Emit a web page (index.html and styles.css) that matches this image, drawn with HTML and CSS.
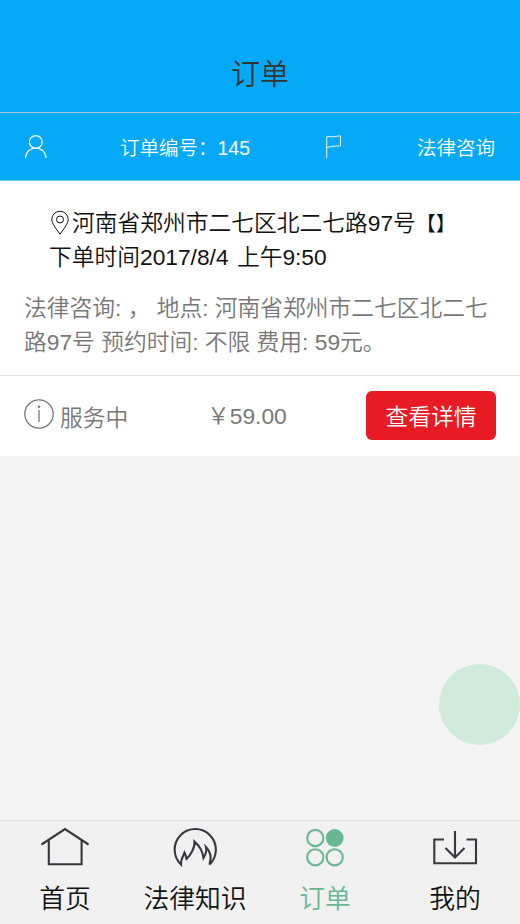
FILE: index.html
```
<!DOCTYPE html>
<html lang="zh-CN">
<head>
<meta charset="utf-8">
<title>订单</title>
<link rel="stylesheet" href="styles.css">
</head>
<body>
<div class="app">
  <header class="header"><h1>订单</h1></header>
  <main class="content">
    <section class="order">
      <div class="order-head">
        <svg class="user" width="24" height="26" viewBox="0 0 24 26"><circle cx="11.8" cy="8" r="6.4"/><path d="M1.5 24C2 10.8 21.500 10.800 22 24"/></svg>
        <span class="number">订单编号：145</span>
        <svg class="flag" width="20" height="26" viewBox="0 0 20 26"><path d="M3.700 24.500V2.700Q10 3.200 17.500 1.800V11.800Q10 12 3.700 13.500"/></svg>
        <span class="type">法律咨询</span>
      </div>
      <div class="order-body">
        <div class="address">
          <p><svg class="pin" width="23" height="26" viewBox="0 0 23 26"><path d="M11 24.200C7 18.500 2.800 13.500 2.800 9.500A8.200 8.200 0 0 1 19.200 9.500C19.200 13.500 15 18.500 11 24.200Z"/><circle cx="11" cy="9.500" r="3.500"/></svg><span>河南省郑州市二七区北二七路97号<span class="brackets">【】</span></span></p>
          <p class="time">下单时间2017/8/4 上午9:50</p>
        </div>
        <div class="details">
          <p>法律咨询: ， 地点: 河南省郑州市二七区北二七</p>
          <p>路97号 预约时间: 不限 费用: 59元。</p>
        </div>
      </div>
      <div class="order-foot">
        <svg class="info" width="32" height="32" viewBox="0 0 32 32"><circle cx="16" cy="16" r="14.200"/><path d="M16 12V24"/><circle class="dot" cx="16" cy="8.700" r="1.200"/></svg>
        <span class="status">服务中</span>
        <span class="price">￥59.00</span>
        <button type="button">查看详情</button>
      </div>
    </section>
  </main>
  <nav class="tabs">
    <a class="tab">
      <svg width="50" height="42" viewBox="0 0 50 42"><path d="M1.500 17.500L25 2L48.500 17.500M8.800 13V37.300H41.600V13"/></svg>
      <span>首页</span>
    </a>
    <a class="tab">
      <svg width="50" height="42" viewBox="0 0 50 42"><path d="M11 37.500A20.600 20.600 0 1 1 39.500 37.500C42 30 41 25 36 20C37 24 36 27 33.500 31C32.500 23 29 18.500 24.500 14.500C25 21 20 29 16.500 32C15.500 29 16 28 14.500 25.500C13.500 29 10.500 32 11 37.500Z"/></svg>
      <span>法律知识</span>
    </a>
    <a class="tab active">
      <svg width="50" height="42" viewBox="0 0 50 42"><circle cx="15.300" cy="11" r="8.100"/><circle class="dot" cx="34.700" cy="11" r="8.900"/><circle cx="15.300" cy="30.300" r="8.100"/><circle cx="34.700" cy="30.300" r="8.100"/></svg>
      <span>订单</span>
    </a>
    <a class="tab">
      <svg width="50" height="42" viewBox="0 0 50 42"><path d="M14 12.500H4.300V36.300H46V12.500H36.500M25 4V30.500M15.500 21L25 30.500L34.500 21"/></svg>
      <span>我的</span>
    </a>
  </nav>
  <div class="float-button"></div>
</div>
</body>
</html>
```
FILE: styles.css
```
* { box-sizing: border-box; }
body {
  margin: 0;
  font-family: "Liberation Sans", "Noto Sans CJK SC", sans-serif;
  font-weight: 350;
  background: #f4f4f4;
}
.app { display: flex; flex-direction: column; height: 924px; position: relative; overflow: hidden; }
h1, p { margin: 0; font-weight: inherit; }
svg { display: block; flex: none; fill: none; stroke: currentColor; }
.dot { fill: currentColor; stroke: none; }

.header {
  height: 113px;
  padding-top: 37px;
  background: #05a9f7;
  border-bottom: 1px solid #a9c8d9;
  color: #333;
  text-align: center;
}
h1 { font-size: 29px; line-height: 76px; }
.content { flex: 1; }
.order { background: #fff; white-space: nowrap; }
.order-head {
  display: grid;
  grid-template-columns: 96px 203px 60px 1fr;
  align-items: center;
  height: 68px;
  padding: 0 25px 1px 24px;
  background: #05a9f7;
  border-bottom: 1px solid #69c9f8;
  color: #fff;
  font-size: 19.500px;
}
.type { text-align: right; }
.user { margin-top: 2px; stroke-width: 1.200; }
.flag { margin-top: 2px; stroke-width: .9; }
.order-body { height: 194px; padding: 25px 24px 0; font-size: 22.750px; line-height: 34px; }
.address { padding-left: 25px; color: #111; }
.address p { display: flex; align-items: center; height: 34px; }
.address .time { word-spacing: 2px; }
.brackets { font-size: 20px; line-height: 1; }
.pin { stroke-width: 1; }
.details { margin-top: 17px; color: #777; }
.order-foot {
  display: grid;
  grid-template-columns: 37px 147px 1fr 130px;
  align-items: center;
  height: 81px;
  padding: 0 24px 2px 23px;
  border-top: 1px solid #e1e1e1;
  color: #777;
  font-size: 22.750px;
}
.info { margin-top: -2px; stroke-width: 1.300; }
.status { padding-top: 2px; }
.price { margin-top: -1px; }
button {
  height: 49px;
  padding: 0;
  border: 0;
  border-radius: 6px;
  background: #e81b24;
  color: #fff;
  font: inherit;
}

.tabs {
  display: grid;
  grid-template-columns: repeat(4, 1fr);
  height: 104px;
  border-top: 1px solid #ddd;
  background: #f1f1f1;
  color: #111;
}
.tab { display: flex; flex-direction: column; align-items: center; padding-top: 6px; font-size: 25.800px; line-height: 61px; }
.tab svg { color: #38383c; stroke-width: 2.100; }
.active, .active svg { color: #69b792; }
.float-button {
  position: absolute;
  right: 0;
  bottom: 179px;
  width: 81px;
  height: 81px;
  border-radius: 50%;
  background: #d0eadc;
}
```
